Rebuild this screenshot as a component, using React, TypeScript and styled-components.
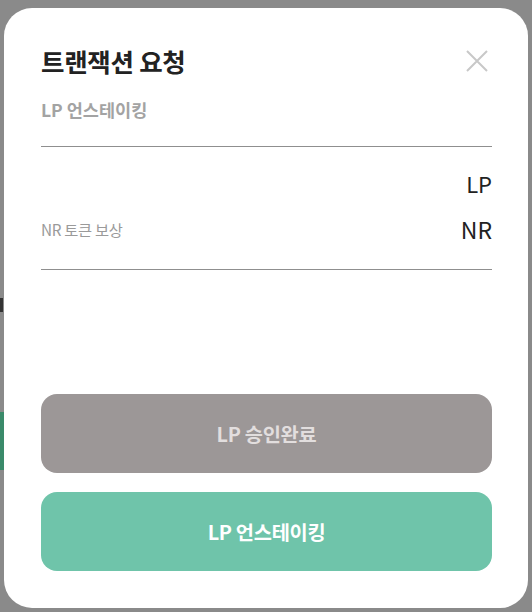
import React from "react";
import styled, { createGlobalStyle } from "styled-components";

const Global = createGlobalStyle`
  html, body { margin: 0; padding: 0; }
  body {
    width: 532px;
    height: 612px;
    overflow: hidden;
    font-family: "Noto Sans CJK KR", "Noto Sans", sans-serif;
    background: #8a8a8a;
  }
`;

const Backdrop = styled.div`
  position: relative;
  width: 532px;
  height: 612px;
  background: #8a8a8a;
  box-sizing: border-box;
  padding: 8px 4px 4px 4px;
  display: flex;
`;

const BehindMark = styled.div<{ $top: number; $left: number; $w: number; $h: number; $c: string }>`
  position: absolute;
  top: ${(p) => p.$top}px;
  left: ${(p) => p.$left}px;
  width: ${(p) => p.$w}px;
  height: ${(p) => p.$h}px;
  background: ${(p) => p.$c};
`;

const Modal = styled.div`
  position: relative;
  z-index: 1;
  flex: 1;
  background: #fff;
  border-radius: 28px;
  padding: 39px 36px 37px 37px;
  display: flex;
  flex-direction: column;
`;

const Header = styled.div`
  display: flex;
  align-items: center;
  justify-content: space-between;
  height: 28px;
`;

const Title = styled.h1`
  margin: 0;
  font-size: 25.5px;
  font-weight: 700;
  color: #222;
  letter-spacing: -0.3px;
  line-height: 28px;
`;

const Close = styled.button`
  border: 0;
  background: none;
  padding: 0;
  width: 22px;
  height: 22px;
  margin-right: 4px;
  display: flex;
  align-items: center;
  justify-content: center;
  cursor: pointer;
`;

const Subtitle = styled.div`
  margin-top: 25px;
  font-size: 17.5px;
  font-weight: 700;
  color: #a3a3a3;
  line-height: 20px;
`;

const Divider = styled.div<{ $mt: number }>`
  margin-top: ${(p) => p.$mt}px;
  height: 1px;
  background: #8f8f8f;
`;

const Rows = styled.div`
  display: flex;
  flex-direction: column;
  padding-top: 21px;
  gap: 16px;
`;

const Row = styled.div`
  display: flex;
  align-items: center;
  justify-content: space-between;
  height: 30px;
`;

const Label = styled.span`
  font-size: 15.3px;
  color: #9a9a9a;
  letter-spacing: -0.3px;
`;

const Value = styled.span<{ $size: number }>`
  font-size: ${(p) => p.$size}px;
  color: #222;
  margin-left: auto;
`;

const Spacer = styled.div`
  flex: 1;
`;

const Buttons = styled.div`
  display: flex;
  flex-direction: column;
  gap: 19px;
`;

const ActionButton = styled.button<{ $bg: string; $fg: string }>`
  height: 79px;
  border: 0;
  border-radius: 16px;
  background: ${(p) => p.$bg};
  color: ${(p) => p.$fg};
  font-family: inherit;
  font-size: 19.8px;
  font-weight: 700;
  letter-spacing: -0.3px;
  cursor: pointer;
`;

export default function App() {
  return (
    <>
      <Global />
      <Backdrop>
        <BehindMark $top={412} $left={0} $w={4} $h={58} $c="#3a8a6a" />
        <BehindMark $top={298} $left={0} $w={3} $h={14} $c="#333" />
        <Modal>
          <Header>
            <Title>트랜잭션 요청</Title>
            <Close aria-label="닫기">
              <svg width="22" height="22" viewBox="0 0 22 22">
                <path d="M1 1L21 21M21 1L1 21" stroke="#c8c8c8" strokeWidth="2" fill="none" />
              </svg>
            </Close>
          </Header>
          <Subtitle>LP 언스테이킹</Subtitle>
          <Divider $mt={26} />
          <Rows>
            <Row>
              <Value $size={22}>LP</Value>
            </Row>
            <Row>
              <Label>NR 토큰 보상</Label>
              <Value $size={23}>NR</Value>
            </Row>
          </Rows>
          <Divider $mt={25} />
          <Spacer />
          <Buttons>
            <ActionButton $bg="#9c9797" $fg="#e2dede">LP 승인완료</ActionButton>
            <ActionButton $bg="#6fc4aa" $fg="#ffffff">LP 언스테이킹</ActionButton>
          </Buttons>
        </Modal>
      </Backdrop>
    </>
  );
}
